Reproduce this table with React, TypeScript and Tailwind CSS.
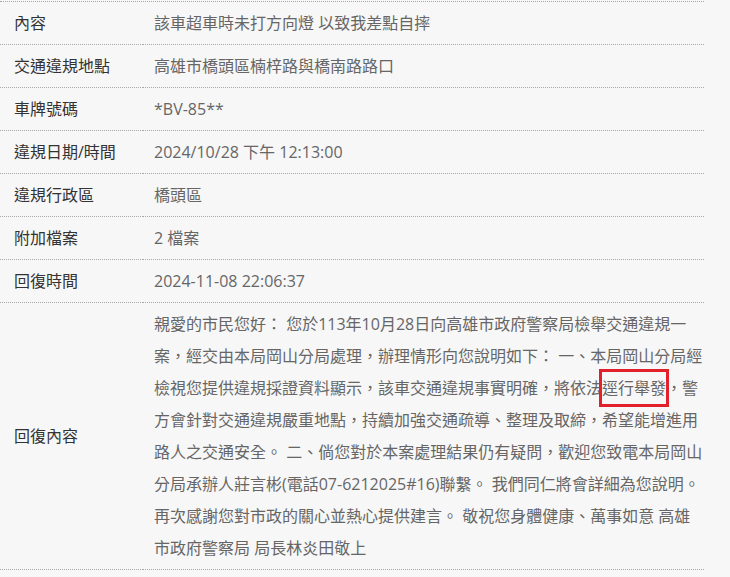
import React from 'react';

const rows: { label: string; value: string }[] = [
  { label: '內容', value: '該車超車時未打方向燈 以致我差點自摔' },
  { label: '交通違規地點', value: '高雄市橋頭區楠梓路與橋南路路口' },
  { label: '車牌號碼', value: '*BV-85**' },
  { label: '違規日期/時間', value: '2024/10/28 下午 12:13:00' },
  { label: '違規行政區', value: '橋頭區' },
  { label: '附加檔案', value: '2 檔案' },
  { label: '回復時間', value: '2024-11-08 22:06:37' },
];

const App = () => {
  return (
    <div
      className="w-[730px] h-[577px] overflow-hidden bg-[#f7f7f7] pt-px text-[16px] leading-8"
      style={{ fontFamily: '"Open Sans", "Noto Sans CJK TC", sans-serif' }}
    >
      <div className="w-[704px] grid grid-cols-[143px_561px] border-t border-dotted border-[#a8a8a8]">
        {rows.map((r) => (
          <React.Fragment key={r.label}>
            <div className="pl-[14px] py-[5px] text-[#333] border-b border-dotted border-[#a8a8a8] flex items-center">
              {r.label}
            </div>
            <div className="pl-[11px] py-[5px] text-[#666] border-b border-dotted border-[#a8a8a8]">
              {r.value}
            </div>
          </React.Fragment>
        ))}

        {/* 回復內容 */}
        <div className="pl-[14px] py-[5px] text-[#333] border-b border-dotted border-[#a8a8a8] flex items-center">
          回復內容
        </div>
        <div className="pl-[11px] py-[5px] text-[#666] border-b border-dotted border-[#a8a8a8] whitespace-nowrap">
          <div>親愛的市民您好： 您於113年10月28日向高雄市政府警察局檢舉交通違規一</div>
          <div>案，經交由本局岡山分局處理，辦理情形向您說明如下： 一、本局岡山分局經</div>
          <div>
            檢視您提供違規採證資料顯示，該車交通違規事實明確，將依法
            <span className="inline-block outline-[3px] outline-solid outline-[#e3212b]">逕行舉發</span>
            ，警
          </div>
          <div>方會針對交通違規嚴重地點，持續加強交通疏導、整理及取締，希望能增進用</div>
          <div>路人之交通安全。 二、倘您對於本案處理結果仍有疑問，歡迎您致電本局岡山</div>
          <div>分局承辦人莊言彬(電話07-6212025#16)聯繫。 我們同仁將會詳細為您說明。</div>
          <div>再次感謝您對市政的關心並熱心提供建言。 敬祝您身體健康、萬事如意 高雄</div>
          <div>市政府警察局 局長林炎田敬上</div>
        </div>
      </div>
    </div>
  );
};

export default App;
